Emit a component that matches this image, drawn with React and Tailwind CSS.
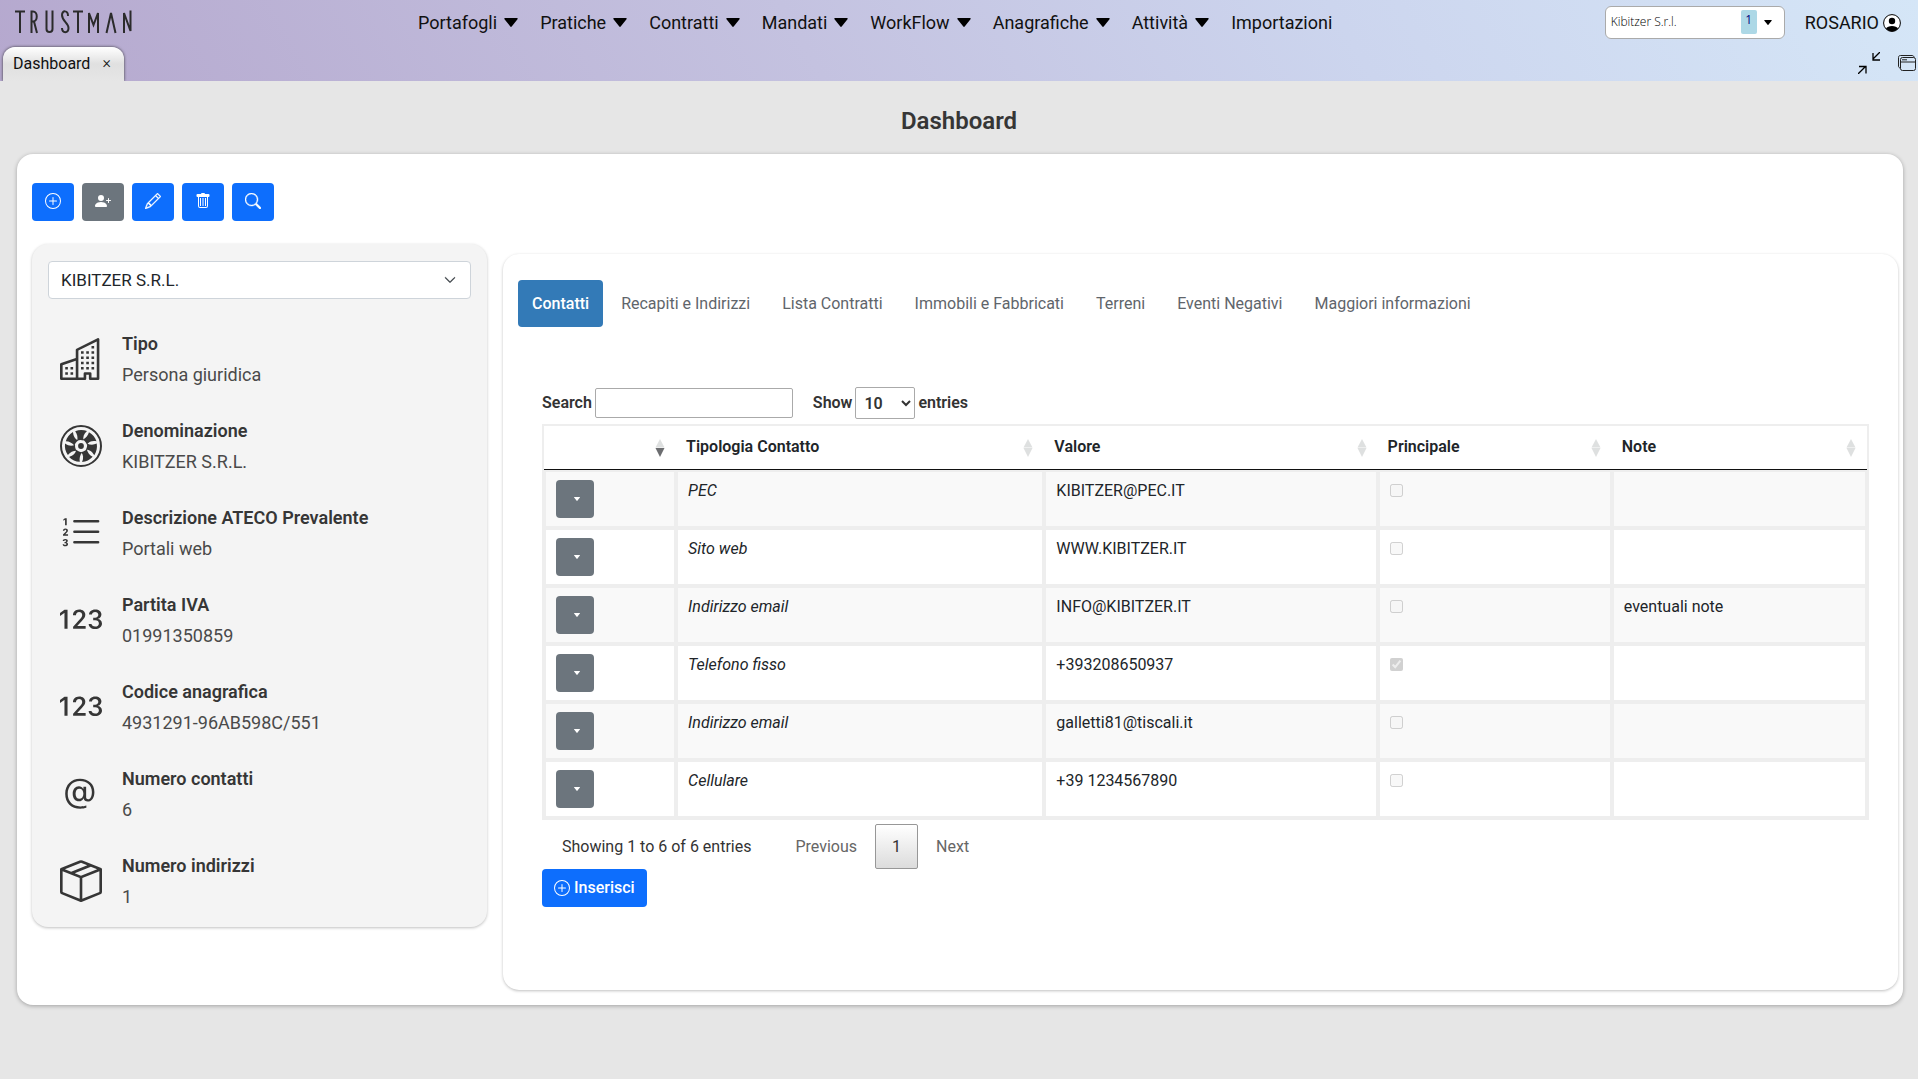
import {
  Bs123,
  BsAt,
  BsBoxSeam,
  BsBuildings,
  BsChevronDown,
  BsListOl,
  BsPencil,
  BsPersonPlusFill,
  BsPlusCircle,
  BsSearch,
} from "react-icons/bs";

const menu = [
  { label: "Portafogli", sub: true },
  { label: "Pratiche", sub: true },
  { label: "Contratti", sub: true },
  { label: "Mandati", sub: true },
  { label: "WorkFlow", sub: true },
  { label: "Anagrafiche", sub: true },
  { label: "Attività", sub: true },
  { label: "Importazioni", sub: false },
];

const tabs = [
  "Contatti",
  "Recapiti e Indirizzi",
  "Lista Contratti",
  "Immobili e Fabbricati",
  "Terreni",
  "Eventi Negativi",
  "Maggiori informazioni",
];

const columns = [
  { label: "", width: "w-[132px]", sorted: true },
  { label: "Tipologia Contatto", width: "w-[368px]" },
  { label: "Valore", width: "w-[333px]" },
  { label: "Principale", width: "w-[234px]" },
  { label: "Note", width: "w-[255px]" },
];

const rows = [
  { tipo: "PEC", valore: "KIBITZER@PEC.IT", principale: false, note: "" },
  { tipo: "Sito web", valore: "WWW.KIBITZER.IT", principale: false, note: "" },
  { tipo: "Indirizzo email", valore: "INFO@KIBITZER.IT", principale: false, note: "eventuali note" },
  { tipo: "Telefono fisso", valore: "+393208650937", principale: true, note: "" },
  { tipo: "Indirizzo email", valore: "galletti81@tiscali.it", principale: false, note: "" },
  { tipo: "Cellulare", valore: "+39 1234567890", principale: false, note: "" },
];

const Logo = () => (
  <svg
    className="h-6 w-[118px]"
    viewBox="0 0 118 24"
    fill="none"
    stroke="#2b2b2b"
    strokeWidth="2"
    role="img"
    aria-label="Trustman"
  >
    <path d="M0 1.5h10M5 1.5V23" />
    <path d="M16.500 23V1.500h1.500c5 0 5 10 0 10h-1.500M19 11.500l3 11.500" />
    <path d="M31.500 .5v18.500c0 4 6 4 6 0V.5" />
    <path d="M53 6c0-6-6-6-6-1 0 6 6.500 8 6.500 13 0 5.500-6.500 5.500-6.500 0" />
    <path d="M58 1.500h10M63 1.500V23" />
    <path d="M74 23V3l4.500 12L83 3v20" />
    <path d="M91.500 23l4.500-20 4.500 20" />
    <path d="M109 23V3l6.500 18V.5" />
  </svg>
);

const Fan = () => (
  <svg className="size-[42px]" viewBox="0 0 42 42" fill="currentColor" aria-hidden="true">
    <circle cx="21" cy="21" r="20" fill="none" stroke="currentColor" strokeWidth="2" />
    {[0, 51.4, 102.8, 154.3, 205.7, 257.1, 308.5].map((angle) => (
      <path
        key={angle}
        d="M17.200 15.800C18 12 17.200 9 15.200 6.200c3.800-1.700 8-1.600 11.800-.2-3.300 3-4.200 5.800-3.500 9.500-2.200-.7-4.300-.7-6.300.3z"
        transform={`rotate(${angle} 21 21)`}
      />
    ))}
    <circle cx="21" cy="21" r="2.900" />
  </svg>
);

const Trash = () => (
  <svg className="size-4" viewBox="0 0 16 16" fill="currentColor" aria-hidden="true">
    <path
      d="M2.500 1a1 1 0 0 0-1 1v1a1 1 0 0 0 1 1H3v9a2 2 0 0 0 2 2h6a2 2 0 0 0 2-2V4h.5a1 1 0 0 0 1-1V2a1 1 0 0 0-1-1H10a1 1 0 0 0-1-1H7a1 1 0 0 0-1 1zM4 4h8v9a1 1 0 0 1-1 1H5a1 1 0 0 1-1-1z"
      fillRule="evenodd"
    />
    <path d="M5 5h1v8H5zM7.500 5h1v8h-1zM10 5h1v8h-1z" />
  </svg>
);

const UserCircle = () => (
  <svg className="size-[18px]" viewBox="0 0 18 18" aria-hidden="true">
    <circle cx="9" cy="9" r="8.400" fill="#fff" stroke="#000" />
    <circle cx="9" cy="7" r="3.200" />
    <path d="M3 14.500c1.500-3.500 10.500-3.500 12 0-3 4-9 4-12 0z" />
  </svg>
);

const Caret = ({ className }) => (
  <svg className={className} viewBox="0 0 14 9" fill="currentColor" aria-hidden="true">
    <path d="M1 0h12q1.300 0 .5 1.200L7.700 8.500q-.7.900-1.400 0L.5 1.200Q-.3 0 1 0z" />
  </svg>
);

const Sorter = ({ sorted }) => (
  <svg className="h-[18px] w-[10px]" viewBox="0 0 10 18" aria-hidden="true">
    <path d="M5 0l4.500 8.500h-9z" fill="#dee0e0" />
    <path d="M.5 9h9L5 18z" fill={sorted ? "#6c6d70" : "#dee0e0"} />
  </svg>
);

const details = [
  { label: "Tipo", value: "Persona giuridica", icon: <BsBuildings /> },
  { label: "Denominazione", value: "KIBITZER S.R.L.", icon: <Fan /> },
  { label: "Descrizione ATECO Prevalente", value: "Portali web", icon: <BsListOl /> },
  { label: "Partita IVA", value: "01991350859", icon: <Bs123 /> },
  { label: "Codice anagrafica", value: "4931291-96AB598C/551", icon: <Bs123 /> },
  { label: "Numero contatti", value: "6", icon: <BsAt /> },
  { label: "Numero indirizzi", value: "1", icon: <BsBoxSeam /> },
];

const actions = [
  { label: "Nuovo", icon: <BsPlusCircle /> },
  { label: "Aggiungi persona", icon: <BsPersonPlusFill />, muted: true },
  { label: "Modifica", icon: <BsPencil strokeWidth="0.3" /> },
  { label: "Elimina", icon: <Trash /> },
  { label: "Cerca", icon: <BsSearch strokeWidth="0.4" /> },
];

const Header = () => (
  <header className="flex h-[81px] flex-col justify-between overflow-hidden bg-[linear-gradient(60deg,#b5a8ce_0%,#c4c2e0_42%,#ccd5ee_70%,#d5e6f7_100%)] text-[#111]">
    <div className="flex h-[44px] items-center justify-between pr-[17px] pl-[15px]">
      <a href="#" className="w-[403px]">
        <Logo />
      </a>
      <nav className="flex flex-1 gap-[22px] pt-px text-lg">
        {menu.map((item) => (
          <a key={item.label} href="#" className="flex items-center gap-[7px]">
            {item.label}
            {item.sub && <Caret className="h-[9px] w-[14px] text-black" />}
          </a>
        ))}
      </nav>
      <div className="flex items-center gap-5">
        <button
          type="button"
          className="flex h-[33px] w-[180px] items-center rounded-md border border-[#aaa] bg-white px-[5px] font-['Open_Sans',sans-serif] text-xs font-light text-black"
        >
          <span className="flex-1 text-left">Kibitzer S.r.l.</span>
          <span className="mr-[6px] h-6 w-4 rounded-xs bg-[#add8e6] text-center leading-5 font-normal text-[navy]">1</span>
          <Caret className="mr-[6px] h-[5px] w-[10px]" />
        </button>
        <a href="#" className="flex items-center gap-1 pt-px text-lg">
          ROSARIO
          <UserCircle />
        </a>
      </div>
    </div>
    <div className="flex items-end justify-between pr-0.5 pl-[3px]">
      <div className="flex h-[34px] w-[121px] items-center rounded-t-xl bg-linear-to-b from-white via-[#e0e0e0] to-[#e6e6e6] pl-[10px] shadow-[0_0_3px_#333]">
        <a href="#" className="flex-1">
          Dashboard
        </a>
        <button type="button" className="mr-[13px] pb-0.5 text-base leading-4 font-light" aria-label="Chiudi">
          ×
        </button>
      </div>
      <div className="flex items-center gap-[18px] pb-[7px]">
        <button type="button" aria-label="Riduci">
          <svg className="size-[22px]" viewBox="0 0 22 22" fill="none" stroke="#000" strokeWidth="1.300">
            <path d="M22 0l-7 7M15 1v7h7M0 22l7-7M1 14.500h7v7" />
          </svg>
        </button>
        <button type="button" aria-label="Finestre">
          <svg className="h-4 w-[18px]" viewBox="0 0 18 16" fill="none" stroke="#222">
            <rect x="2.500" y="2.500" width="15" height="13" rx="2" />
            <path d="M2.500 7h15M2.500 13C1 13 .5 12 .5 11V2.500c0-1.300.7-2 2-2H14c1 0 2 .5 2 2M4 4.800h5" />
          </svg>
        </button>
      </div>
    </div>
  </header>
);

const Sidebar = () => (
  <aside className="w-[455px] shrink-0 rounded-2xl bg-[#f4f4f4] px-4 pt-[17px] pb-[15px] shadow-[0_1px_3px_rgba(0,0,0,0.25)]">
    <div className="relative">
      <select
        aria-label="Azienda"
        className="h-[38px] w-full appearance-none rounded-sm border border-[#ced4da] bg-white px-3 pt-px text-[17px] text-[#212529]"
      >
        <option>KIBITZER S.R.L.</option>
      </select>
      <BsChevronDown
        strokeWidth="0.8"
        className="pointer-events-none absolute top-[13px] right-[15px] size-3 text-[#343a40]"
      />
    </div>
    <dl className="mt-[29px] flex flex-col gap-[25px] px-3 text-lg text-[#363636]">
      {details.map((item) => (
        <div key={item.label} className="flex items-center gap-5">
          <span className="text-[42px]" aria-hidden="true">
            {item.icon}
          </span>
          <div className="pt-px">
            <dt className="leading-[30px] font-semibold">{item.label}</dt>
            <dd className="leading-[31px] text-[#4a4a4a]">{item.value}</dd>
          </div>
        </div>
      ))}
    </dl>
  </aside>
);

const ContactsTable = () => (
  <table className="w-full table-fixed border-separate border-spacing-0 border-2 border-[#eee] text-left text-[#212529]">
    <thead>
      <tr>
        {columns.map((col) => (
          <th
            key={col.label}
            className={`${col.width} h-[44px] border-b border-[#111] pt-[9px] pr-[11px] pl-[10px] align-top leading-6 font-semibold`}
          >
            <div className="flex justify-between">
              <span>{col.label}</span>
              <span className="pt-1">
                <Sorter sorted={col.sorted} />
              </span>
            </div>
          </th>
        ))}
      </tr>
    </thead>
    <tbody>
      {rows.map((row) => (
        <tr key={row.valore} className="align-top leading-[22px] odd:bg-[#f9f9f9]">
          <td className="h-[58px] border-2 border-[#eee] px-[10px] py-2">
            <button
              type="button"
              aria-label="Azioni"
              className="flex h-[38px] w-[38px] items-center justify-center rounded-sm bg-[#6c757d] pb-px pl-1 text-white"
            >
              <Caret className="h-1 w-2" />
            </button>
          </td>
          <td className="border-2 border-[#eee] px-[10px] py-2 italic">{row.tipo}</td>
          <td className="border-2 border-[#eee] px-[10px] py-2">{row.valore}</td>
          <td className="border-2 border-[#eee] px-[10px] py-3">
            <input
              type="checkbox"
              aria-label="Principale"
              className="block size-[13px]"
              defaultChecked={row.principale}
              disabled
            />
          </td>
          <td className="border-2 border-[#eee] px-[10px] py-2">{row.note}</td>
        </tr>
      ))}
    </tbody>
  </table>
);

const Contacts = () => (
  <section className="min-w-0 flex-1 rounded-2xl bg-white pt-[26px] pr-[29px] pb-[83px] pl-[15px] shadow-[0_1px_3px_rgba(0,0,0,0.25)]">
    <nav className="flex h-[47px] gap-1">
      {tabs.map((tab, i) => (
        <a
          key={tab}
          href="#"
          className={
            i === 0
              ? "flex items-center rounded-sm bg-[#337ab7] px-[14px] font-medium text-white"
              : "flex items-center px-[14px] text-[#5f656b]"
          }
        >
          {tab}
        </a>
      ))}
    </nav>
    <div className="mt-[60px] ml-6">
      <div className="flex h-8 items-center gap-[3px] font-semibold text-[#333]">
        <label htmlFor="search">Search</label>
        <input id="search" type="text" className="h-[30px] w-[198px] rounded-xs border border-[#aaa] px-1" />
        <label htmlFor="length" className="ml-[17px]">
          Show
        </label>
        <select id="length" className="h-[32px] w-[60px] rounded-xs border border-[#aaa] bg-white pl-1">
          <option>10</option>
        </select>
        <span>entries</span>
      </div>
      <div className="mt-[5px]">
        <ContactsTable />
      </div>
      <div className="mt-1 flex h-[45px] items-center text-[#666]">
        <p className="mr-[30px] pl-5 text-[#333]">Showing 1 to 6 of 6 entries</p>
        <button type="button" className="px-[14px]">
          Previous
        </button>
        <button
          type="button"
          className="mx-1 h-[45px] w-[43px] rounded-xs border border-[#979797] bg-linear-to-b from-white to-[#dcdcdc] text-[#333]"
        >
          1
        </button>
        <button type="button" className="px-[14px]">
          Next
        </button>
      </div>
      <button
        type="button"
        className="flex h-[38px] items-center gap-1 rounded-sm bg-[#0d6efd] px-3 font-medium text-white"
      >
        <BsPlusCircle />
        Inserisci
      </button>
    </div>
  </section>
);

const App = () => {
  return (
    <div className="min-h-screen bg-[#e6e6e6] font-[Roboto,sans-serif] text-base">
      <Header />
      <h1 className="pt-6 pb-[17px] text-center text-2xl font-semibold text-[#363636]">Dashboard</h1>
      <main className="mr-[15px] ml-[17px] rounded-2xl bg-white pt-[29px] pr-[5px] pb-[15px] pl-[15px] shadow-[0_1px_4px_rgba(0,0,0,0.3)]">
        <div className="flex gap-2">
          {actions.map((action) => (
            <button
              key={action.label}
              type="button"
              aria-label={action.label}
              className={
                action.muted
                  ? "flex h-[38px] w-[42px] justify-center rounded-sm bg-[#6c757d] pt-[10px] text-white"
                  : "flex h-[38px] w-[42px] justify-center rounded-sm bg-[#0d6efd] pt-[10px] text-white"
              }
            >
              {action.icon}
            </button>
          ))}
        </div>
        <div className="mt-[23px] flex items-start gap-4">
          <Sidebar />
          <div className="flex min-w-0 flex-1 pt-[10px]">
            <Contacts />
          </div>
        </div>
      </main>
    </div>
  );
};

export default App;
